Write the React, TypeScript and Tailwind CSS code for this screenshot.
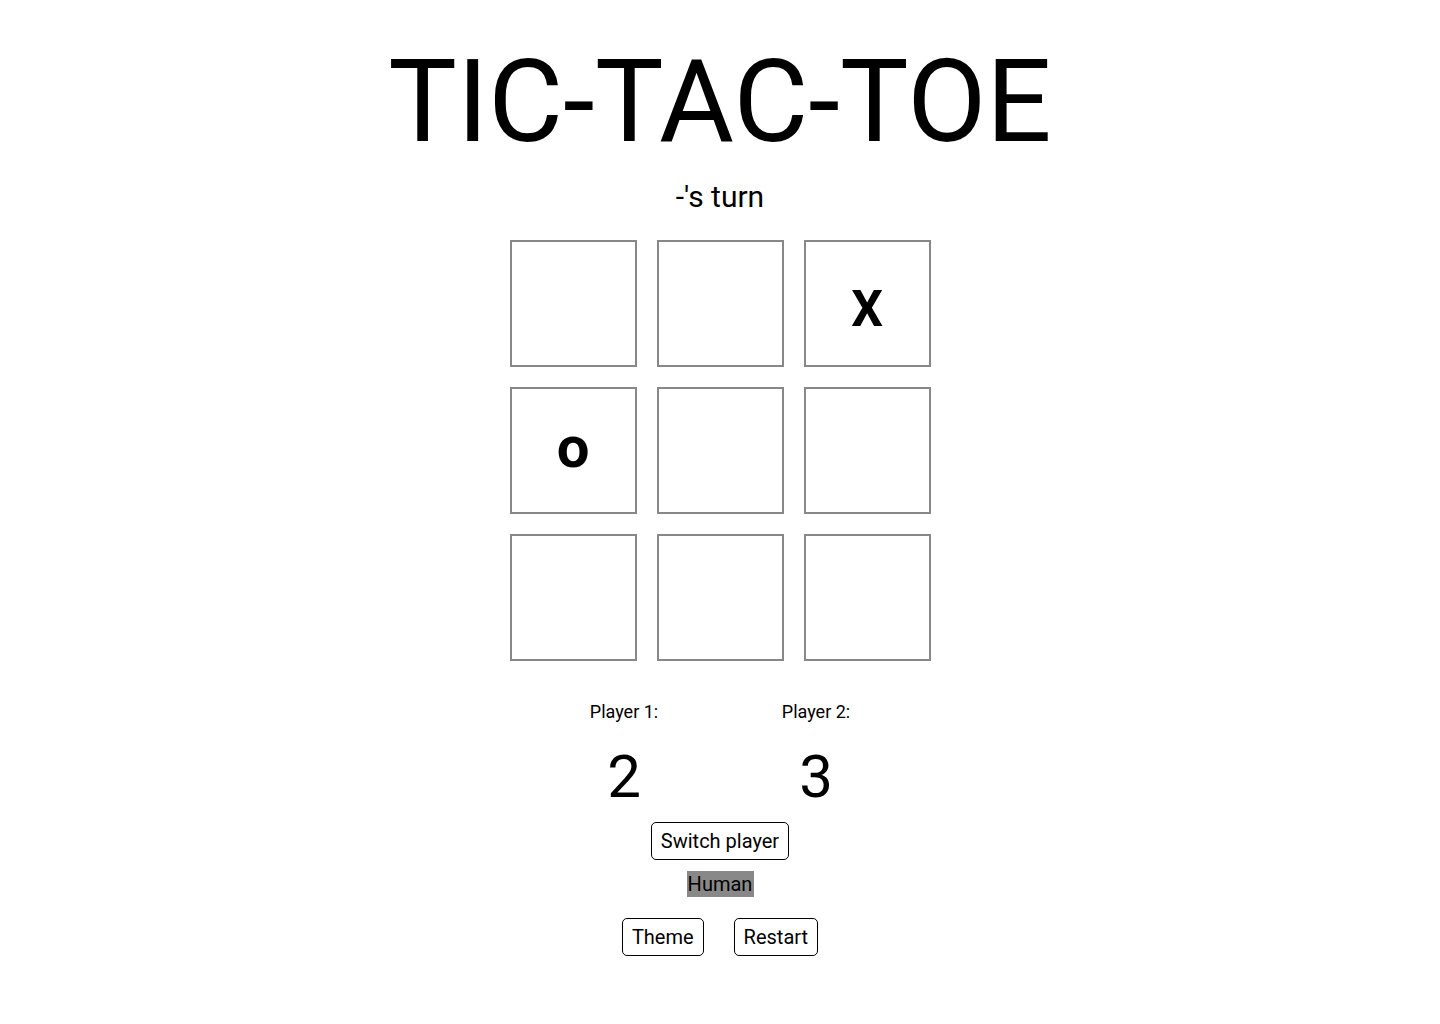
import React, { useState } from "react";

const font = { fontFamily: "Roboto, 'Liberation Sans', sans-serif" };

// --- tablero inicial ---
const initialBoard = ["", "", "X", "o", "", "", "", "", ""];

function Cell({ value }: { value: string }) {
  return (
    <div className="w-[127px] h-[127px] border-2 border-[#888] flex items-center justify-center">
      {value === "X" && (
        <span className="text-[50px] font-bold leading-none mt-[10px]">X</span>
      )}
      {value === "o" && (
        <span className="text-[58px] font-bold leading-none -mt-[8px]">o</span>
      )}
    </div>
  );
}

export default function App() {
  const [board] = useState<string[]>(initialBoard);
  const [scores] = useState({ p1: 2, p2: 3 });

  return (
    <div className="w-full min-h-screen bg-white text-black flex flex-col items-center" style={font}>
      <h1 className="text-[115px] font-normal mt-[35px] leading-[134px]">TIC-TAC-TOE</h1>
      <p className="text-[30px] mt-[10px] leading-[35px]">-'s turn</p>

      <div className="grid grid-cols-3 gap-5 mt-[26px]">
        {board.map((v, i) => (
          <Cell key={i} value={v} />
        ))}
      </div>

      <div className="flex mt-[40px]">
        <div className="w-[192px] flex flex-col items-center">
          <span className="text-[18px] leading-[21px]">Player 1:</span>
          <span className="text-[60px] leading-[70px] mt-[20px]">{scores.p1}</span>
        </div>
        <div className="w-[192px] flex flex-col items-center">
          <span className="text-[18px] leading-[21px]">Player 2:</span>
          <span className="text-[60px] leading-[70px] mt-[20px]">{scores.p2}</span>
        </div>
      </div>

      <button className="mt-[10px] h-[38px] px-[9px] border border-black rounded-[5px] text-[20px] leading-none bg-white">
        Switch player
      </button>
      <div className="mt-[11px] w-[67px] h-[26px] bg-[#888] text-[20px] flex items-center justify-center">
        Human
      </div>

      <div className="flex gap-[30px] mt-[21px]">
        <button className="h-[38px] px-[9px] border border-black rounded-[5px] text-[20px] leading-none bg-white">
          Theme
        </button>
        <button className="h-[38px] px-[9px] border border-black rounded-[5px] text-[20px] leading-none bg-white">
          Restart
        </button>
      </div>
    </div>
  );
}
